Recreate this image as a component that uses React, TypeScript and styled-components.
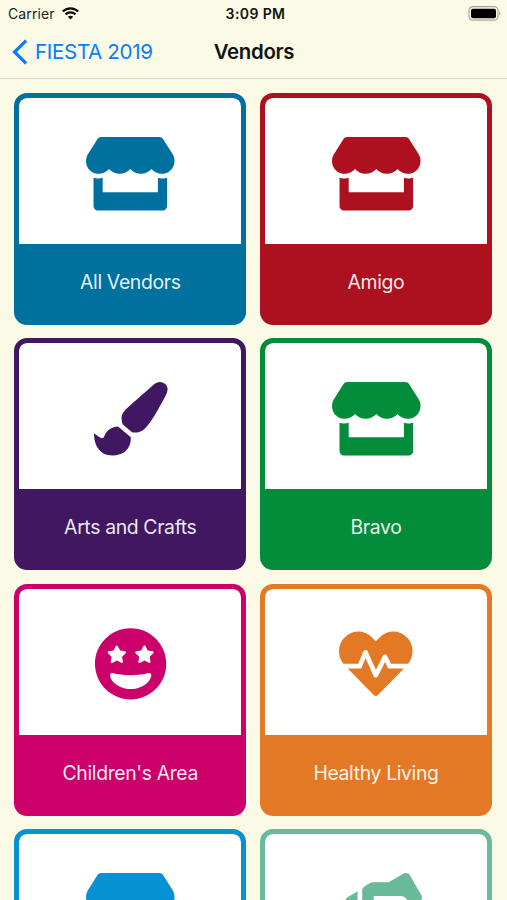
import React from "react";
import styled, { createGlobalStyle } from "styled-components";
import { FaStore, FaPaintBrush, FaGrinStars, FaHeartbeat, FaHandsHelping } from "react-icons/fa";
import type { IconType } from "react-icons";

const GlobalStyle = createGlobalStyle`
  * { box-sizing: border-box; }
  body { margin: 0; background: #fafae6; overflow: hidden; }
`;

const Screen = styled.main`
  width: 507px;
  height: 900px;
  overflow: hidden;
  background: #fafae6;
  color: #11120e;
  font-family: Inter, "Liberation Sans", sans-serif;
`;

const StatusBar = styled.div`
  display: grid;
  grid-template-columns: 1fr auto 1fr;
  align-items: center;
  height: 27px;
  padding: 0 6px 0 8px;
`;

const Carrier = styled.div`
  display: flex;
  align-items: center;
  gap: 7px;
  font-size: 14px;
  letter-spacing: 0.1px;
  color: #22231e;
`;

const Clock = styled.time`
  padding-left: 2px;
  font-size: 14px;
  font-weight: 600;
  letter-spacing: 0.4px;
  line-height: 17px;
`;

const Battery = styled.svg`
  justify-self: end;
`;

const NavBar = styled.header`
  display: grid;
  grid-template-columns: 1fr auto 1fr;
  align-items: center;
  height: 52px;
  padding: 0 12px 2px;
  border-bottom: 1px solid #d4d4c4;
`;

const BackButton = styled.button`
  display: flex;
  align-items: center;
  gap: 7px;
  padding: 0;
  border: 0;
  background: none;
  color: #0a7cfb;
  font: 400 20.6px Inter, sans-serif;
  letter-spacing: -0.35px;
`;

const Title = styled.h1`
  margin: 0;
  padding-left: 1px;
  font-size: 20.4px;
  font-weight: 600;
  letter-spacing: -0.3px;
`;

const Grid = styled.section`
  display: grid;
  grid-template-columns: 232px 232px;
  grid-auto-rows: 231.8px;
  gap: 13.7px;
  padding: 13.8px 14.3px;
`;

const Card = styled.article<{ $color: string }>`
  display: flex;
  flex-direction: column;
  overflow: hidden;
  border: 5px solid ${(p) => p.$color};
  border-radius: 13px;
  background: ${(p) => p.$color};
`;

const IconPanel = styled.div<{ $color: string; $iconWidth: number }>`
  display: flex;
  flex: 0 0 146px;
  align-items: center;
  justify-content: center;
  padding-top: 5px;
  border-radius: 8px 8px 0 0;
  background: #fff;
  color: ${(p) => p.$color};

  svg {
    flex: none;
    overflow: visible;
    width: ${(p) => p.$iconWidth}px;
    height: 73.6px;
  }
`;

const Label = styled.div`
  display: flex;
  flex: 1;
  align-items: center;
  justify-content: center;
  color: rgba(255, 255, 255, 0.92);
  font-size: 19.4px;
  letter-spacing: -0.36px;
`;

interface Vendor {
  name: string;
  color: string;
  icon: IconType;
  iconWidth: number;
}

const vendors: Vendor[] = [
  { name: "All Vendors", color: "#00719f", icon: FaStore, iconWidth: 88.6 },
  { name: "Amigo", color: "#ad1120", icon: FaStore, iconWidth: 88.6 },
  { name: "Arts and Crafts", color: "#421761", icon: FaPaintBrush, iconWidth: 73.6 },
  { name: "Bravo", color: "#038d3a", icon: FaStore, iconWidth: 88.6 },
  { name: "Children's Area", color: "#cc006b", icon: FaGrinStars, iconWidth: 71.3 },
  { name: "Healthy Living", color: "#e47925", icon: FaHeartbeat, iconWidth: 73.6 },
  { name: "", color: "#0691d2", icon: FaStore, iconWidth: 88.6 },
  { name: "", color: "#69b99b", icon: FaHandsHelping, iconWidth: 92 },
];

export default function App() {
  return (
    <Screen>
      <GlobalStyle />
      <StatusBar>
        <Carrier>
          Carrier
          <svg width="17" height="13" viewBox="0 0 17 13" fill="none" stroke="#080908" strokeWidth="2.2">
            <path d="M.8 4.5C5.2.2 11.8.2 16.2 4.5" />
            <path d="M3.5 7.4c2.8-2.7 7.2-2.7 10 0" />
            <path d="M5.8 9.7 8.5 12.5l2.7-2.8c-1.5-1.4-3.9-1.4-5.4 0Z" fill="#080908" stroke="none" />
          </svg>
        </Carrier>
        <Clock>3:09 PM</Clock>
        <Battery width="33" height="15" viewBox="0 0 33 15">
          <rect x="1" y=".7" width="29" height="13.5" rx="3.7" fill="none" stroke="#a5a597" strokeWidth="1.2" />
          <rect x="3" y="2.7" width="25" height="9.5" rx="2" fill="#000" />
          <path d="M31.3 5.3c1.6.8 1.6 3.5 0 4.3Z" fill="#a5a597" />
        </Battery>
      </StatusBar>
      <NavBar>
        <BackButton>
          <svg width="16" height="26" viewBox="0 0 16 26" fill="none" stroke="currentColor" strokeWidth="3.2">
            <path d="M14.1 1.7 2.5 13l11.6 11.3" />
          </svg>
          FIESTA 2019
        </BackButton>
        <Title>Vendors</Title>
      </NavBar>
      <Grid>
        {vendors.map(({ name, color, icon: Icon, iconWidth }) => (
          <Card key={color} $color={color}>
            <IconPanel $color={color} $iconWidth={iconWidth}>
              <Icon />
            </IconPanel>
            <Label>{name}</Label>
          </Card>
        ))}
      </Grid>
    </Screen>
  );
}
